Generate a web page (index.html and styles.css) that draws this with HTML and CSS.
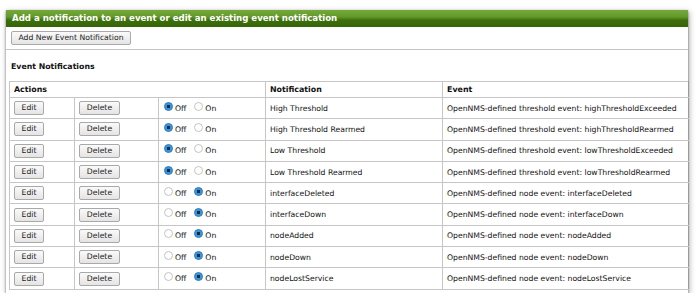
FILE: index.html
```html
<!DOCTYPE html>
<html>
<head>
<meta charset="utf-8">
<link rel="stylesheet" href="styles.css">
</head>
<body>
<div class="panel">
  <div class="panel-header">Add a notification to an event or edit an existing event notification</div>
  <div class="toolbar"><button class="btn btn-add">Add New Event Notification</button></div>
  <h3 class="section-title">Event Notifications</h3>
  <table class="notif-table">
    <colgroup><col class="w-edit"><col class="w-del"><col class="w-radio"><col class="w-notif"><col class="w-event"></colgroup>
    <thead>
      <tr><th colspan="3">Actions</th><th>Notification</th><th>Event</th></tr>
    </thead>
    <tbody>
      <tr><td><button class="btn btn-edit">Edit</button></td><td><button class="btn btn-del">Delete</button></td><td class="c-radio"><label><input type="radio" name="r1" checked>Off</label><label><input type="radio" name="r1">On</label></td><td>High Threshold</td><td>OpenNMS-defined threshold event: highThresholdExceeded</td></tr>
      <tr><td><button class="btn btn-edit">Edit</button></td><td><button class="btn btn-del">Delete</button></td><td class="c-radio"><label><input type="radio" name="r2" checked>Off</label><label><input type="radio" name="r2">On</label></td><td>High Threshold Rearmed</td><td>OpenNMS-defined threshold event: highThresholdRearmed</td></tr>
      <tr><td><button class="btn btn-edit">Edit</button></td><td><button class="btn btn-del">Delete</button></td><td class="c-radio"><label><input type="radio" name="r3" checked>Off</label><label><input type="radio" name="r3">On</label></td><td>Low Threshold</td><td>OpenNMS-defined threshold event: lowThresholdExceeded</td></tr>
      <tr><td><button class="btn btn-edit">Edit</button></td><td><button class="btn btn-del">Delete</button></td><td class="c-radio"><label><input type="radio" name="r4" checked>Off</label><label><input type="radio" name="r4">On</label></td><td>Low Threshold Rearmed</td><td>OpenNMS-defined threshold event: lowThresholdRearmed</td></tr>
      <tr><td><button class="btn btn-edit">Edit</button></td><td><button class="btn btn-del">Delete</button></td><td class="c-radio"><label><input type="radio" name="r5">Off</label><label><input type="radio" name="r5" checked>On</label></td><td>interfaceDeleted</td><td>OpenNMS-defined node event: interfaceDeleted</td></tr>
      <tr><td><button class="btn btn-edit">Edit</button></td><td><button class="btn btn-del">Delete</button></td><td class="c-radio"><label><input type="radio" name="r6">Off</label><label><input type="radio" name="r6" checked>On</label></td><td>interfaceDown</td><td>OpenNMS-defined node event: interfaceDown</td></tr>
      <tr><td><button class="btn btn-edit">Edit</button></td><td><button class="btn btn-del">Delete</button></td><td class="c-radio"><label><input type="radio" name="r7">Off</label><label><input type="radio" name="r7" checked>On</label></td><td>nodeAdded</td><td>OpenNMS-defined node event: nodeAdded</td></tr>
      <tr><td><button class="btn btn-edit">Edit</button></td><td><button class="btn btn-del">Delete</button></td><td class="c-radio"><label><input type="radio" name="r8">Off</label><label><input type="radio" name="r8" checked>On</label></td><td>nodeDown</td><td>OpenNMS-defined node event: nodeDown</td></tr>
      <tr><td><button class="btn btn-edit">Edit</button></td><td><button class="btn btn-del">Delete</button></td><td class="c-radio"><label><input type="radio" name="r9">Off</label><label><input type="radio" name="r9" checked>On</label></td><td>nodeLostService</td><td>OpenNMS-defined node event: nodeLostService</td></tr>
    </tbody>
  </table>
</div>
</body>
</html>
```
FILE: styles.css
```css
html, body {
  margin: 0;
  padding: 0;
  background: #ffffff;
}
body {
  font-family: "DejaVu Sans", Verdana, sans-serif;
  color: #111;
  padding: 10px 12px 0 6px;
}
.panel {
  width: 682px;
  box-sizing: border-box;
  background: #fff;
  box-shadow: 0 1px 2px rgba(0,0,0,0.45), 1px 2px 6px rgba(0,0,0,0.35);
  padding-bottom: 3px;
}
.panel-header {
  height: 17px;
  line-height: 17px;
  background: linear-gradient(#76a83c 0%, #629a2a 40%, #3e6e0c 60%, #356606 100%);
  color: #fff;
  font-weight: bold;
  font-size: 8.6px;
  padding-left: 6px;
}
.toolbar {
  padding: 4px 0 4px 5px;
  border-bottom: 1px solid #c4c4c4;
}
.btn {
  font-family: "DejaVu Sans", Verdana, sans-serif;
  font-size: 7.7px;
  color: #222;
  background: linear-gradient(#fafafa, #e4e4e4);
  border: 1px solid #a9a9a9;
  border-radius: 2px;
  height: 14px;
  padding: 0;
  line-height: 12px;
  display: block;
}
.btn-add {
  width: 120px;
}
.section-title {
  font-size: 7.8px;
  font-weight: bold;
  margin: 0;
  padding: 12px 0 0 5px;
  height: 19px;
  box-sizing: content-box;
}
.notif-table {
  border-collapse: collapse;
  margin-left: 3px;
  width: 679px;
  font-size: 7.7px;
  table-layout: fixed;
}
.w-edit { width: 65px; }
.w-del { width: 84px; }
.w-radio { width: 107px; }
.w-notif { width: 177px; }
.w-event { width: 246px; }
.notif-table th, .notif-table td {
  border: 1px solid #c6c6c6;
  padding: 0 4px;
  text-align: left;
  white-space: nowrap;
  overflow: hidden;
}
.notif-table th {
  height: 15px;
  font-weight: bold;
  font-size: 7.9px;
}
.notif-table td {
  height: 20.3px;
}
.notif-table tr > :last-child {
  border-right-color: #9a9a9a;
}
.btn-edit { width: 30px; }
.btn-del { width: 41px; }
.notif-table td.c-radio {
  padding-left: 5px;
}
.c-radio label {
  display: inline-flex;
  align-items: center;
  margin-right: 8px;
  padding-top: 2px;
}
.c-radio input {
  appearance: none;
  -webkit-appearance: none;
  width: 9px;
  height: 9px;
  margin: 0 2px 0 0;
  border-radius: 50%;
  border: 1px solid #c4c4c4;
  background: #fff;
  box-sizing: border-box;
  position: relative;
  top: -2px;
}
.c-radio input:checked {
  border-color: #2f80c4;
  background: radial-gradient(circle, #0f2b45 0 1.5px, #3c94d8 2px);
}
```
